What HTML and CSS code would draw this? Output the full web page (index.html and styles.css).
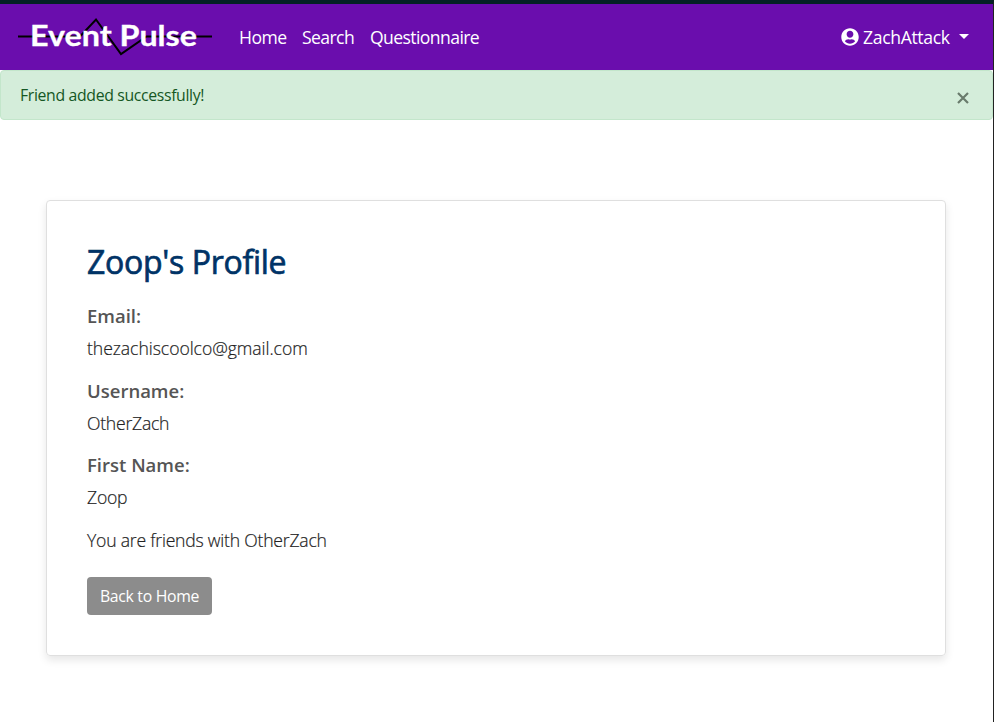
FILE: index.html
```html
<!DOCTYPE html>
<html lang="en">
<head>
<meta charset="utf-8">
<title>Event Pulse</title>
<link rel="stylesheet" href="styles.css">
</head>
<body>
<nav class="navbar">
  <a class="brand" aria-label="Event Pulse">
    <svg width="196" height="50" viewBox="0 0 196 50">
      <path class="pulse" d="M0 24.5H62L78 7.500L103 42L128.500 24.500H194"/>
      <text class="brand-text" x="12" y="33.800" textLength="167" lengthAdjust="spacingAndGlyphs">Event Pulse</text>
    </svg>
  </a>
  <div class="links">
    <a class="link home">Home</a>
    <a class="link search">Search</a>
    <a class="link quiz">Questionnaire</a>
  </div>
  <a class="user">
    <svg class="user-icon" width="18" height="18" viewBox="0 0 496 512"><path fill="currentColor" d="M248 8C111 8 0 119 0 256s111 248 248 248 248-111 248-248S385 8 248 8zm0 72c53 0 96 43 96 96s-43 104-96 104-96-51-96-104 43-96 96-96zm0 368c-58.700 0-111.300-26.600-146.500-68.200 18.800-35.400 55.600-59.800 98.500-59.800 2.400 0 4.800.4 7.100 1.100 13 4.200 26.600 6.900 40.900 6.900s28-2.700 40.900-6.900c2.300-.7 4.700-1.100 7.100-1.100 42.900 0 79.700 24.400 98.500 59.800C359.300 421.400 306.700 448 248 448z"/></svg>
    <span class="user-name">ZachAttack</span>
    <span class="caret"></span>
  </a>
</nav>
<div class="alert">
  <span class="alert-text">Friend added successfully!</span>
  <svg class="close" width="12" height="12" viewBox="0 0 12 12"><path d="M1 1L11 11M11 1L1 11"/></svg>
</div>
<main class="card">
  <h1 class="title">Zoop's Profile</h1>
  <dl class="fields">
    <dt>Email:</dt><dd class="email">thezachiscoolco@gmail.com</dd>
    <dt>Username:</dt><dd>OtherZach</dd>
    <dt>First Name:</dt><dd>Zoop</dd>
  </dl>
  <p class="status">You are friends with OtherZach</p>
  <a class="button">Back to Home</a>
</main>
</body>
</html>
```
FILE: styles.css
```css
* { box-sizing: border-box; }
body {
  margin: 0;
  height: 722px;
  overflow: hidden;
  border-top: 4px solid #052125;
  border-right: 1px solid #222;
  background: #fff;
  color: #212529;
  font-family: "Open Sans", "Noto Sans", sans-serif;
}
.navbar {
  display: flex;
  align-items: center;
  height: 66px;
  padding: 0 24px 0 18px;
  background: #6a0dad;
  color: #fff;
  font-size: 17.600px;
}
.brand { display: flex; width: 221px; }
.brand svg { margin-top: -1px; }
.pulse { fill: none; stroke: #000; stroke-width: 2; }
.brand-text { fill: #fff; stroke: #fff; stroke-width: .3; font: 700 29px Lato, sans-serif; }
.links { display: flex; gap: 16px; }
.link { white-space: nowrap; line-height: 27px; }
.home { width: 47px; letter-spacing: -.5px; }
.search { width: 52px; letter-spacing: -.6px; }
.quiz { letter-spacing: -.6px; }
.user { display: flex; align-items: center; margin-left: auto; line-height: 27px; }
.user-icon { position: relative; left: 1px; }
.user-name { width: 87px; margin-left: 5px; letter-spacing: -.35px; }
.caret { margin: -1px 0 0 9px; border: 5px solid transparent; border-top-color: #fff; border-bottom: 0; }
.alert {
  display: flex;
  align-items: center;
  justify-content: space-between;
  height: 50px;
  padding: 0 23px 0 19px;
  border: 1px solid #c3e6cb;
  border-radius: 4px;
  background: #d4edda;
  color: #155724;
  font-size: 15.800px;
}
.alert-text { letter-spacing: -.34px; line-height: 24px; }
.close { margin-top: 5px; fill: none; stroke: #697b6c; stroke-width: 2.200; }
.card {
  width: 900px;
  height: 456px;
  margin: 80px 0 0 46px;
  padding: 40px;
  border: 1px solid #dfdfdf;
  border-radius: 4px;
  box-shadow: 0 4px 8px rgba(0, 0, 0, .1);
}
.title { margin: 1px 0 17px; color: #003366; font-size: 32px; font-weight: 400; line-height: 40px; letter-spacing: -.3px; -webkit-text-stroke: .7px #003366; }
.fields { margin: 0; }
.fields dt { height: 33px; color: #555; font-size: 18.500px; font-weight: 600; line-height: 34px; letter-spacing: 0; }
.fields dd { height: 41.600px; margin: 0; color: #222; font-size: 17.600px; font-weight: 300; line-height: 32px; letter-spacing: -.24px; -webkit-text-stroke: .2px #222; }
.fields .email { letter-spacing: -.05px; }
.status { margin: 1px 0 21px; color: #222; font-size: 17.600px; font-weight: 300; line-height: 32px; letter-spacing: -.22px; -webkit-text-stroke: .2px #222; }
.button {
  display: inline-flex;
  align-items: center;
  justify-content: center;
  width: 125px;
  height: 38px;
  border-radius: 4px;
  background: #8c8c8c;
  color: #fff;
  font-size: 15.800px;
  letter-spacing: -.3px;
}
```
